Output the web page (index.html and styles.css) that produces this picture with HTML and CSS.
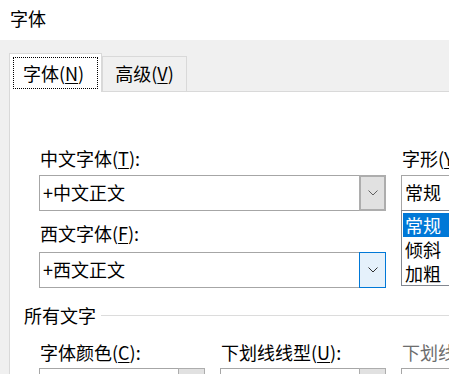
FILE: index.html
```html
<!DOCTYPE html>
<html lang="zh-CN">
<head>
    <meta charset="UTF-8">
    <title>字体</title>
    <link rel="stylesheet" href="styles.css">
</head>
<body>
    <div class="titlebar">字体</div>
    <div class="dialog">
        <div class="tabs">
            <div class="tab active"><span class="focus">字体(<u>N</u>)</span></div>
            <div class="tab">高级(<u>V</u>)</div>
        </div>
        <div class="panel">
            <div class="top-row">
                <div class="col-main">
                    <label class="lbl">中文字体(<u>T</u>):</label>
                    <div class="combo">
                        <div class="combo-text">+中文正文</div>
                        <div class="combo-btn">
                            <svg width="10" height="6" viewBox="0 0 10 6"><polyline points="0.5,0.5 5,5 9.5,0.5" fill="none" stroke="#606060" stroke-width="1"/></svg>
                        </div>
                    </div>
                    <label class="lbl second">西文字体(<u>F</u>):</label>
                    <div class="combo">
                        <div class="combo-text">+西文正文</div>
                        <div class="combo-btn hot">
                            <svg width="10" height="6" viewBox="0 0 10 6"><polyline points="0.5,0.5 5,5 9.5,0.5" fill="none" stroke="#303030" stroke-width="1"/></svg>
                        </div>
                    </div>
                </div>
                <div class="col-side">
                    <label class="lbl">字形(<u>Y</u>):</label>
                    <div class="editbox">常规</div>
                    <div class="listbox">
                        <div class="item selected">常规</div>
                        <div class="item">倾斜</div>
                        <div class="item">加粗</div>
                    </div>
                </div>
            </div>

            <div class="group-head">
                <span>所有文字</span>
                <div class="rule"></div>
            </div>

            <div class="bottom-row">
                <div class="field">
                    <label class="lbl">字体颜色(<u>C</u>):</label>
                    <div class="combo small"><div class="combo-text"></div><div class="combo-btn"></div></div>
                </div>
                <div class="field">
                    <label class="lbl">下划线线型(<u>U</u>):</label>
                    <div class="combo small"><div class="combo-text"></div><div class="combo-btn"></div></div>
                </div>
                <div class="field">
                    <label class="lbl disabled">下划线颜色(<u>I</u>):</label>
                    <div class="combo small"><div class="combo-text"></div><div class="combo-btn"></div></div>
                </div>
            </div>
        </div>
    </div>
</body>
</html>
```

FILE: styles.css
```css
html, body {
    margin: 0;
    padding: 0;
    overflow: hidden;
}
body {
    width: 449px;
    height: 374px;
    font-family: "Noto Sans CJK SC", "Noto Sans", sans-serif;
    font-size: 18px;
    color: #000;
    background-color: #f0f0f0;
}
u {
    text-decoration-thickness: 1px;
    text-underline-offset: 2px;
}
.titlebar {
    height: 40px;
    line-height: 36px;
    padding-left: 10px;
    background-color: #fff;
}
.dialog {
    padding: 13px 0 0 9px;
    width: 700px;
}
.tabs {
    display: flex;
    align-items: flex-end;
    height: 38px;
}
.tab {
    height: 35px;
    box-sizing: border-box;
    border: 1px solid #d9d9d9;
    border-bottom: none;
    padding: 0 12px;
    line-height: 33px;
    background-color: #f0f0f0;
}
.tab.active {
    height: 39px;
    margin-bottom: -1px;
    background-color: #fff;
    padding: 3px 3px 0 3px;
    position: relative;
    z-index: 1;
}
.focus {
    display: block;
    border: 1px dotted #000;
    padding: 0 13px 0 9px;
    line-height: 30px;
}
.panel {
    background-color: #fff;
    border-top: 1px solid #d9d9d9;
    border-left: 1px solid #d9d9d9;
    padding: 54px 0 0 14px;
    height: 400px;
}
.top-row {
    display: flex;
    gap: 15px;
    margin-left: 15px;
}
.col-main {
    width: 347px;
}
.col-side {
    width: 200px;
}
.lbl {
    display: block;
    line-height: 24px;
    height: 24px;
    margin-bottom: 5px;
    padding-left: 1px;
}
.lbl.second {
    margin-top: 10px;
    margin-bottom: 7px;
}
.lbl.disabled {
    color: #6d6d6d;
}
.combo {
    display: flex;
    height: 36px;
    box-sizing: border-box;
    border: 1px solid #a6a6a6;
    background-color: #fff;
}
.combo-text {
    flex: 1;
    line-height: 32px;
    padding-left: 3px;
}
.combo-btn {
    width: 27px;
    margin: -1px -1px -1px 0;
    box-sizing: border-box;
    border: 2px solid #adadad;
    background-color: #e1e1e1;
    display: flex;
    align-items: center;
    justify-content: center;
}
.combo-btn.hot {
    border: 1px solid #0078d7;
    background-color: #e5f1fb;
}
.editbox {
    height: 35px;
    box-sizing: border-box;
    border: 1px solid #a6a6a6;
    border-bottom: none;
    line-height: 32px;
    padding-left: 3px;
}
.listbox {
    border: 1px solid #828790;
    padding: 2px 0 0 1px;
    height: 72px;
}
.item {
    height: 24px;
    line-height: 24px;
    padding-left: 2px;
}
.item.selected {
    background-color: #0078d7;
    color: #fff;
}
.group-head {
    display: flex;
    align-items: center;
    margin-top: 15px;
    height: 24px;
}
.group-head span {
    line-height: 24px;
}
.rule {
    flex: 1;
    height: 1px;
    background-color: #dcdcdc;
    margin-left: 5px;
}
.bottom-row {
    display: flex;
    gap: 15px;
    margin: 13px 0 0 15px;
}
.bottom-row .lbl {
    margin-bottom: 4px;
}
.field {
    width: 166px;
}
.bottom-row .field:last-child {
    width: 200px;
}
.combo.small .combo-btn {
    border-width: 1px;
}
```
